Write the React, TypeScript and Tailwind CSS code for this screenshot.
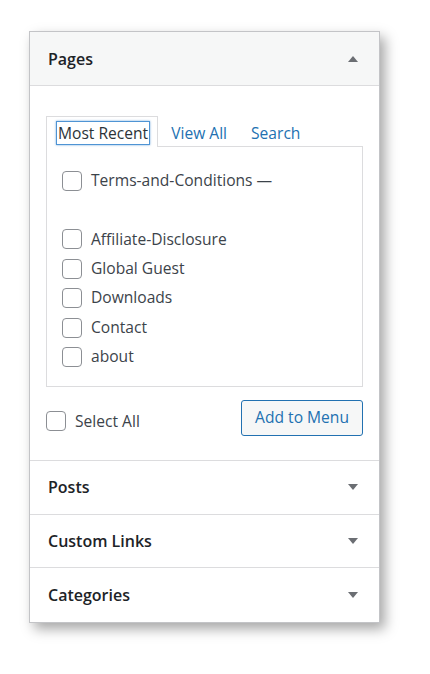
import React from "react";

const font = { fontFamily: '"Open Sans", "Noto Sans", sans-serif' };

function Caret({ up }: { up?: boolean }) {
  return (
    <svg width="10" height="6" viewBox="0 0 10 6" className="block">
      {up ? <polygon points="0,6 10,6 5,0" fill="#6b6e73" /> : <polygon points="0,0 10,0 5,6" fill="#6b6e73" />}
    </svg>
  );
}

function Box() {
  return <span className="block w-[20px] h-[20px] rounded-[4px] border border-[#8c8f94] bg-white shrink-0" />;
}

function Row({ label }: { label: string }) {
  return (
    <div className="flex items-center h-[29.4px]">
      {label ? <Box /> : null}
      {label ? <span className="ml-[9px] text-[15.6px] text-[#3c434a] leading-none">{label}</span> : null}
    </div>
  );
}

function Section({ title, last }: { title: string; last?: boolean }) {
  return (
    <div className={`flex items-center justify-between h-[53.5px] pl-[18px] pr-[21px] ${last ? "" : "border-b border-[#dcdcde]"}`}>
      <span className="text-[16px] font-semibold text-[#1d2327]">{title}</span>
      <Caret />
    </div>
  );
}

export default function App() {
  const items = ["Terms-and-Conditions —", "", "Affiliate-Disclosure", "Global Guest", "Downloads", "Contact", "about"];
  return (
    <div className="w-[430px] h-[674px] bg-white pt-[31px] pl-[29px]" style={font}>
      <div className="w-[351px] bg-white border border-[#c3c4c7] shadow-[5px_6px_12px_rgba(0,0,0,0.35)]">
        <div className="flex items-center justify-between h-[54px] bg-[#f6f7f7] border-b border-[#dcdcde] pl-[18px] pr-[21px]">
          <span className="text-[16px] font-semibold text-[#1d2327]">Pages</span>
          <Caret up />
        </div>
        <div className="px-[16px] pt-[30px] pb-[24px] border-b border-[#dcdcde]">
          <div className="flex items-end h-[30px]">
            <div className="h-[31px] border border-b-0 border-[#dcdcde] bg-white pl-[9px] pr-[7px] pt-[4px] relative z-10 -mb-px">
              <span className="inline-block border border-[#4f94d4] shadow-[0_0_2px_rgba(79,148,212,0.8)] px-[1px] text-[15.6px] leading-[22px] text-[#2c3338]">
                Most Recent
              </span>
            </div>
            <span className="ml-[13px] mb-[2px] text-[15.6px] leading-[22px] text-[#2271b1]">View All</span>
            <span className="ml-[24px] mb-[2px] text-[15.6px] leading-[22px] text-[#2271b1]">Search</span>
          </div>
          <div className="border border-[#dcdcde] h-[241px] pt-[19px] pl-[15px]">
            {items.map((t, i) => (
              <Row key={i} label={t} />
            ))}
          </div>
          <div className="flex items-start justify-between mt-[13px]">
            <div className="flex items-center mt-[11px]">
              <Box />
              <span className="ml-[9px] text-[15.6px] leading-[20px] text-[#3c434a]">Select All</span>
            </div>
            <button className="h-[36px] px-[13px] rounded-[3px] border border-[#2271b1] bg-[#f6f7f7] text-[15.6px] text-[#2271b1]">
              Add to Menu
            </button>
          </div>
        </div>
        <Section title="Posts" />
        <Section title="Custom Links" />
        <Section title="Categories" last />
      </div>
    </div>
  );
}
